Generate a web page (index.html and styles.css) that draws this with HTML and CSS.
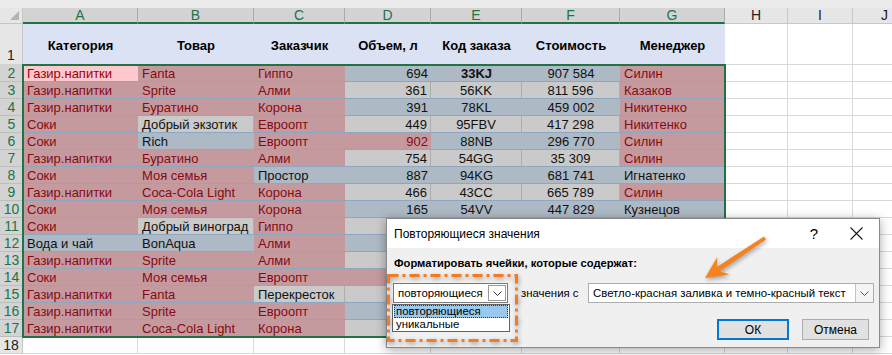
FILE: index.html
```html
<!DOCTYPE html>
<html lang="ru">
<head>
<meta charset="utf-8">
<title>Повторяющиеся значения</title>
<link rel="stylesheet" href="styles.css">
</head>
<body>
<div class="sheet">
  <div class="topstrip"></div>
  <div class="row colhdr">
    <div class="corner"><span class="tri"></span></div>
    <div class="ch sel">A</div><div class="ch sel">B</div><div class="ch sel">C</div><div class="ch sel">D</div><div class="ch sel">E</div><div class="ch sel">F</div><div class="ch sel">G</div>
    <div class="ch">H</div><div class="ch">I</div><div class="ch">J</div>
  </div>
  <div class="row r1">
    <div class="rh rh-off rh-bottom">1</div>
    <div class="hd">Категория</div><div class="hd">Товар</div><div class="hd">Заказчик</div><div class="hd">Объем, л</div><div class="hd">Код заказа</div><div class="hd">Стоимость</div><div class="hd">Менеджер</div>
    <div class="c w"></div><div class="c w"></div><div class="c w"></div>
  </div>
  <div class="row">
    <div class="rh">2</div>
    <div class="c act">Газир.напитки</div><div class="c p">Fanta</div><div class="c p">Гиппо</div><div class="c b rt">694</div><div class="c b ct strong">33KJ</div><div class="c b ct">907 584</div><div class="c p">Силин</div>
    <div class="c w"></div><div class="c w"></div><div class="c w"></div>
  </div>
  <div class="row">
    <div class="rh">3</div>
    <div class="c p">Газир.напитки</div><div class="c p">Sprite</div><div class="c p">Алми</div><div class="c g rt">361</div><div class="c g ct">56KK</div><div class="c g ct">811 596</div><div class="c p">Казаков</div>
    <div class="c w"></div><div class="c w"></div><div class="c w"></div>
  </div>
  <div class="row">
    <div class="rh">4</div>
    <div class="c p">Газир.напитки</div><div class="c p">Буратино</div><div class="c p">Корона</div><div class="c b rt">391</div><div class="c b ct">78KL</div><div class="c b ct">459 002</div><div class="c p">Никитенко</div>
    <div class="c w"></div><div class="c w"></div><div class="c w"></div>
  </div>
  <div class="row">
    <div class="rh">5</div>
    <div class="c p">Соки</div><div class="c g">Добрый экзотик</div><div class="c p">Евроопт</div><div class="c g rt">449</div><div class="c g ct">95FBV</div><div class="c g ct">417 298</div><div class="c p">Никитенко</div>
    <div class="c w"></div><div class="c w"></div><div class="c w"></div>
  </div>
  <div class="row">
    <div class="rh">6</div>
    <div class="c p">Соки</div><div class="c b">Rich</div><div class="c p">Евроопт</div><div class="c p rt">902</div><div class="c b ct">88NB</div><div class="c b ct">296 770</div><div class="c p">Силин</div>
    <div class="c w"></div><div class="c w"></div><div class="c w"></div>
  </div>
  <div class="row">
    <div class="rh">7</div>
    <div class="c p">Газир.напитки</div><div class="c p">Буратино</div><div class="c p">Алми</div><div class="c g rt">754</div><div class="c g ct">54GG</div><div class="c g ct">35 309</div><div class="c p">Силин</div>
    <div class="c w"></div><div class="c w"></div><div class="c w"></div>
  </div>
  <div class="row">
    <div class="rh">8</div>
    <div class="c p">Соки</div><div class="c p">Моя семья</div><div class="c b">Простор</div><div class="c b rt">887</div><div class="c b ct">94KG</div><div class="c b ct">681 741</div><div class="c b">Игнатенко</div>
    <div class="c w"></div><div class="c w"></div><div class="c w"></div>
  </div>
  <div class="row">
    <div class="rh">9</div>
    <div class="c p">Газир.напитки</div><div class="c p">Coca-Cola Light</div><div class="c p">Корона</div><div class="c g rt">466</div><div class="c g ct">43CC</div><div class="c g ct">665 789</div><div class="c p">Силин</div>
    <div class="c w"></div><div class="c w"></div><div class="c w"></div>
  </div>
  <div class="row">
    <div class="rh">10</div>
    <div class="c p">Соки</div><div class="c p">Моя семья</div><div class="c p">Корона</div><div class="c b rt">165</div><div class="c b ct">54VV</div><div class="c b ct">447 829</div><div class="c b">Кузнецов</div>
    <div class="c w"></div><div class="c w"></div><div class="c w"></div>
  </div>
  <div class="row">
    <div class="rh">11</div>
    <div class="c p">Соки</div><div class="c g">Добрый виноград</div><div class="c p">Гиппо</div><div class="c g"></div><div class="c g"></div><div class="c g"></div><div class="c p"></div>
    <div class="c w"></div><div class="c w"></div><div class="c w"></div>
  </div>
  <div class="row">
    <div class="rh">12</div>
    <div class="c b">Вода и чай</div><div class="c b">BonAqua</div><div class="c p">Алми</div><div class="c b"></div><div class="c b"></div><div class="c b"></div><div class="c b"></div>
    <div class="c w"></div><div class="c w"></div><div class="c w"></div>
  </div>
  <div class="row">
    <div class="rh">13</div>
    <div class="c p">Газир.напитки</div><div class="c p">Sprite</div><div class="c p">Алми</div><div class="c g"></div><div class="c g"></div><div class="c g"></div><div class="c p"></div>
    <div class="c w"></div><div class="c w"></div><div class="c w"></div>
  </div>
  <div class="row">
    <div class="rh">14</div>
    <div class="c p">Соки</div><div class="c p">Моя семья</div><div class="c p">Евроопт</div><div class="c p"></div><div class="c b"></div><div class="c b"></div><div class="c p"></div>
    <div class="c w"></div><div class="c w"></div><div class="c w"></div>
  </div>
  <div class="row">
    <div class="rh">15</div>
    <div class="c p">Газир.напитки</div><div class="c p">Fanta</div><div class="c g">Перекресток</div><div class="c g"></div><div class="c g"></div><div class="c g"></div><div class="c p"></div>
    <div class="c w"></div><div class="c w"></div><div class="c w"></div>
  </div>
  <div class="row">
    <div class="rh">16</div>
    <div class="c p">Газир.напитки</div><div class="c p">Sprite</div><div class="c p">Евроопт</div><div class="c b"></div><div class="c b"></div><div class="c b"></div><div class="c p"></div>
    <div class="c w"></div><div class="c w"></div><div class="c w"></div>
  </div>
  <div class="row">
    <div class="rh">17</div>
    <div class="c p">Газир.напитки</div><div class="c p">Coca-Cola Light</div><div class="c p">Корона</div><div class="c g"></div><div class="c g"></div><div class="c g"></div><div class="c p"></div>
    <div class="c w"></div><div class="c w"></div><div class="c w"></div>
  </div>
  <div class="row">
    <div class="rh rh-off">18</div>
    <div class="c w"></div><div class="c w"></div><div class="c w"></div><div class="c w"></div><div class="c w"></div><div class="c w"></div><div class="c w"></div>
    <div class="c w"></div><div class="c w"></div><div class="c w"></div>
  </div>
</div>

<div class="selbox"></div>

<div class="dlg">
  <div class="dlg-title">
    <span class="dlg-name">Повторяющиеся значения</span>
    <span class="dlg-help">?</span>
    <svg class="dlg-close" width="13" height="13" viewBox="0 0 13 13"><path d="M0.5 0.5L12.5 12.5M12.5 0.5L0.5 12.5" stroke="#1a1a1a" stroke-width="1.1" fill="none"/></svg>
  </div>
  <div class="dlg-body">
    <div class="dlg-label">Форматировать ячейки, которые содержат:</div>
    <div class="dlg-controls">
      <div class="combo combo-type">
        <span class="combo-text">повторяющиеся</span>
        <span class="combo-btn combo-btn-open"><svg width="9" height="5" viewBox="0 0 9 5"><path d="M0.5 0.5L4.5 4.5L8.5 0.5" stroke="#333" fill="none"/></svg></span>
      </div>
      <span class="dlg-with">значения с</span>
      <div class="combo combo-fmt">
        <span class="combo-text">Светло-красная заливка и темно-красный текст</span>
        <span class="combo-btn"><svg width="9" height="5" viewBox="0 0 9 5"><path d="M0.5 0.5L4.5 4.5L8.5 0.5" stroke="#555" fill="none"/></svg></span>
      </div>
    </div>
    <div class="dlg-buttons">
      <button class="btn btn-ok">ОК</button>
      <button class="btn btn-cancel">Отмена</button>
    </div>
  </div>
  <div class="dd-list">
    <div class="dd-item dd-active">повторяющиеся</div>
    <div class="dd-item">уникальные</div>
  </div>
</div>

<svg class="annot" width="892" height="355" viewBox="0 0 892 355">
  <rect x="388.5" y="275.5" width="128" height="65" fill="none" stroke="#f47b20" stroke-width="3" stroke-dasharray="10 4 3 4"/>
  <polygon points="705,278 729.5,274.5 719.7,271.2 766,239.6 764,236.4 716.9,267 717.3,257" fill="#f5821f"/>
</svg>
</body>
</html>
```
FILE: styles.css
```css
* { box-sizing: border-box; margin: 0; padding: 0; }
html, body { width: 892px; height: 355px; overflow: hidden; }
body { position: relative; background: #fff; font-family: "Liberation Sans", Arial, sans-serif; color: #111; }

.sheet { display: flex; flex-direction: column; width: 917px; }
.topstrip { height: 8px; background: #ebebeb; }
.row {
  display: grid;
  grid-template-columns: 23px 115px 116px 91px 86px 91px 98px 105px 63px 65px 64px;
  height: 17px;
}
.colhdr { height: 16px; }
.r1 { height: 41px; }

.corner { position: relative; background: #e6e6e6; border-right: 1px solid #c6c6c6; border-bottom: 1px solid #c6c6c6; }
.tri { position: absolute; right: 3px; bottom: 3px; width: 0; height: 0; border-left: 9px solid transparent; border-bottom: 9px solid #b4b4b4; }

.ch {
  background: #e6e6e6; color: #222; font-size: 14px; line-height: 15px; text-align: center;
  border-right: 1px solid #c8c8c8; border-bottom: 1px solid #c8c8c8;
}
.ch.sel { background: #d3d3d3; color: #217346; border-right-color: #ababab; border-bottom: 2px solid #217346; line-height: 14px; }

.rh {
  background: #d3d3d3; color: #217346; font-size: 14px; line-height: 16px; text-align: center;
  border-bottom: 1px solid #bdbdbd;
}
.rh-off { background: #e6e6e6; color: #222; border-right: 1px solid #c6c6c6; border-bottom-color: #d0d0d0; }
.rh-bottom { display: flex; align-items: flex-end; justify-content: center; padding-bottom: 1px; }

.hd {
  background: #dae2f3; font-weight: bold; font-size: 13px; color: #000;
  display: flex; align-items: center; justify-content: center; padding-top: 1px;
}

.c {
  overflow: hidden; white-space: nowrap; font-size: 13px; line-height: 16px;
  padding: 1px 4px 0 4px; border-bottom: 1px solid #8fa6c0;
}
.w { background: #fff; border-right: 1px solid #d9d9d9; border-bottom: 1px solid #d9d9d9; }
.p { background: #c59a9f; color: #850a12; }
.act { background: #ffc7ce; color: #9c0006; }
.b { background: #adb9c4; color: #111; }
.g { background: #cacaca; color: #111; border-right: 1px solid #adadad; }
.rt { text-align: right; padding-right: 3px; }
.ct { text-align: center; }
.strong { font-weight: bold; }

.selbox {
  position: absolute; left: 22px; top: 64px; width: 704px; height: 274px;
  border: 2px solid #217346;
}

/* dialog */
.dlg {
  position: absolute; left: 386px; top: 218px; width: 494px; height: 130px;
  border: 1px solid #8a8a8a; background: #f0f0f0;
  box-shadow: 0 2px 10px rgba(0,0,0,0.35);
  font-family: "Liberation Sans", Arial, sans-serif; color: #000;
  display: flex; flex-direction: column;
}
.dlg-title {
  height: 29px; background: #fff; display: flex; align-items: center;
  padding: 0 16px 0 7px;
}
.dlg-name { flex: 1; font-size: 12px; }
.dlg-help { font-size: 15px; margin-right: 32px; }
.dlg-close { display: block; }

.dlg-body { flex: 1; display: flex; flex-direction: column; padding: 8px 5px 0 7px; }
.dlg-label { font-weight: bold; font-size: 11.2px; line-height: 14px; }
.dlg-controls { display: flex; align-items: center; margin-top: 13px; height: 20px; }
.combo {
  height: 20px; background: #fff; border: 1px solid #7a7a7a; display: flex; align-items: center;
  font-size: 11.4px;
}
.combo-type { width: 115px; margin-left: -1px; }
.combo-fmt { width: 286px; margin-left: auto; border-color: #adadad; }
.combo-text { flex: 1; padding-left: 4px; white-space: nowrap; overflow: hidden; }
.combo-btn {
  width: 18px; height: 18px; display: flex; align-items: center; justify-content: center;
  border-left: 1px solid #c4c4c4; background: #f4f4f4;
}
.combo-btn-open { border: 1px solid #9a9a9a; background: #fff; margin-right: 1px; height: 16px; }
.dlg-with { font-size: 11.4px; margin-left: 13px; }

.dlg-buttons { display: flex; justify-content: flex-end; gap: 13px; margin-top: 16px; padding-right: 5px; }
.btn {
  height: 21px; background: #e1e1e1; border: 1px solid #adadad;
  font-family: "Liberation Sans", Arial, sans-serif; font-size: 12px; color: #000;
}
.btn-ok { width: 72px; border: 2px solid #0078d7; }
.btn-cancel { width: 67px; }

.dd-list {
  position: absolute; left: 5px; top: 85px; width: 118px; height: 28px;
  background: #fff; border: 1px solid #646464; padding: 0 1px;
  font-size: 11.4px; line-height: 13px;
}
.dd-item { height: 13px; padding-left: 2px; }
.dd-active { background: #99c9ef; outline: 1px dotted #333; outline-offset: -1px; }

.annot {
  position: absolute; left: 0; top: 0; pointer-events: none;
  filter: drop-shadow(1px 2px 2px rgba(0,0,0,0.35));
}
```
